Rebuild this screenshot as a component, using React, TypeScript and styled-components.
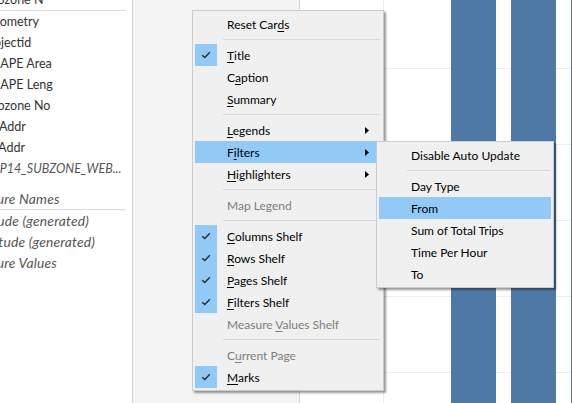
import React from "react";
import styled, { createGlobalStyle } from "styled-components";

const GlobalStyle = createGlobalStyle`
  html, body { margin: 0; padding: 0; background: #fff; }
  body { overflow: hidden; }
  * { box-sizing: border-box; }
`;

const Page = styled.div`
  position: relative;
  display: flex;
  width: 572px;
  height: 403px;
  overflow: hidden;
  background: #fff;
`;

const DataPane = styled.div`
  width: 133px;
  flex: none;
  background: #fff;
  border-right: 1px solid #d4d4d4;
  overflow: hidden;
  display: flex;
  flex-direction: column;
`;

const FieldList = styled.div`
  margin-top: -11px;
  display: flex;
  flex-direction: column;
`;

const Field = styled.div<{ $shift: number; $italic?: boolean; $size?: number }>`
  height: 21px;
  line-height: 21px;
  white-space: nowrap;
  margin-left: ${(p) => -p.$shift}px;
  font-family: Lato, "Liberation Sans", sans-serif;
  font-size: ${(p) => p.$size ?? 12.5}px;
  letter-spacing: ${(p) => (p.$size ? 0.2 : 0)}px;
  font-style: ${(p) => (p.$italic ? "italic" : "normal")};
  color: ${(p) => (p.$italic ? "#555" : "#333")};
`;

const FieldDivider = styled.div`
  height: 1px;
  margin-right: 6px;
  background: #dedede;
`;

const FieldGap = styled.div`
  height: 9px;
`;

const ShelfArea = styled.div`
  width: 167px;
  flex: none;
  background: #f3f3f3;
  border-right: 1px solid #d4d4d4;
`;

const ChartArea = styled.div`
  flex: 1;
  display: flex;
  background: #fff;
`;

const RowHeader = styled.div`
  width: 84px;
  flex: none;
  border-right: 1px solid #ededed;
`;

const Plot = styled.svg`
  flex: 1;
  display: block;
  height: 403px;
`;

const MenuBox = styled.div<{ $left: number; $top: number; $width: number }>`
  position: absolute;
  left: ${(p) => p.$left}px;
  top: ${(p) => p.$top}px;
  width: ${(p) => p.$width}px;
  background: #f0f0f0;
  border: 1px solid #cccccc;
  padding: 2px;
  box-shadow: 2px 2px 2px rgba(0, 0, 0, 0.4);
  font-family: Lato, "Liberation Sans", sans-serif;
  font-size: 12px;
  color: #000;
  z-index: 2;
`;

const Item = styled.div<{ $active?: boolean; $disabled?: boolean }>`
  display: flex;
  align-items: center;
  height: 22px;
  background: ${(p) => (p.$active ? "#91c9f7" : "transparent")};
  color: ${(p) => (p.$disabled ? "#7d7d7d" : "#000")};
  white-space: nowrap;
  u { text-decoration: underline; text-underline-offset: 2px; }
`;

const CheckCell = styled.div<{ $checked?: boolean }>`
  width: 22px;
  height: 22px;
  flex: none;
  display: flex;
  align-items: center;
  justify-content: center;
  background: ${(p) => (p.$checked ? "#91c9f7" : "transparent")};
`;

const Label = styled.span`
  flex: 1;
  padding-left: 10px;
`;

const Arrow = styled.svg`
  flex: none;
  margin-right: 12px;
`;

const Separator = styled.div`
  height: 9px;
  display: flex;
  align-items: center;
  padding-left: 28px;
  padding-right: 1px;
  &::after {
    content: "";
    flex: 1;
    height: 1px;
    background: #d7d7d7;
  }
`;

const Check = () => (
  <svg width="10" height="8" viewBox="0 0 10 8">
    <path d="M1.2 4.2 L3.8 6.6 L8.8 1.2" fill="none" stroke="#2b2b2b" strokeWidth="1.4" />
  </svg>
);

const SubArrow = () => (
  <Arrow width="4" height="7" viewBox="0 0 4 7">
    <polygon points="0,0 4,3.5 0,7" fill="#000" />
  </Arrow>
);

type MI = {
  label: React.ReactNode;
  checked?: boolean;
  disabled?: boolean;
  active?: boolean;
  sub?: boolean;
};

const mainMenu: (MI | "sep")[] = [
  { label: <>Reset Car<u>d</u>s</> },
  "sep",
  { label: <><u>T</u>itle</>, checked: true },
  { label: <>C<u>a</u>ption</> },
  { label: <><u>S</u>ummary</> },
  "sep",
  { label: <><u>L</u>egends</>, sub: true },
  { label: <>F<u>i</u>lters</>, sub: true, active: true },
  { label: <><u>H</u>ighlighters</>, sub: true },
  "sep",
  { label: "Map Legend", disabled: true },
  "sep",
  { label: <><u>C</u>olumns Shelf</>, checked: true },
  { label: <><u>R</u>ows Shelf</>, checked: true },
  { label: <><u>P</u>ages Shelf</>, checked: true },
  { label: <><u>F</u>ilters Shelf</>, checked: true },
  { label: <>Measure <u>V</u>alues Shelf</>, disabled: true },
  "sep",
  { label: <>C<u>u</u>rrent Page</>, disabled: true },
  { label: <><u>M</u>arks</>, checked: true },
];

const subMenu: (MI | "sep")[] = [
  { label: "Disable Auto Update" },
  "sep",
  { label: "Day Type" },
  { label: "From", active: true },
  { label: "Sum of Total Trips" },
  { label: "Time Per Hour" },
  { label: "To" },
];

const renderItems = (items: (MI | "sep")[]) =>
  items.map((it, i) =>
    it === "sep" ? (
      <Separator key={i} />
    ) : (
      <Item key={i} $active={it.active} $disabled={it.disabled}>
        <CheckCell $checked={it.checked}>{it.checked ? <Check /> : null}</CheckCell>
        <Label>{it.label}</Label>
        {it.sub ? <SubArrow /> : null}
      </Item>
    )
  );

const gridYs = [68, 144, 220, 296, 372];

export default function App() {
  return (
    <>
      <GlobalStyle />
      <Page>
        <DataPane>
          <FieldList>
            <Field $shift={16}>Subzone N</Field>
            <FieldDivider />
            <Field $shift={16}>Geometry</Field>
            <Field $shift={16}>Objectid</Field>
            <Field $shift={16}>SHAPE Area</Field>
            <Field $shift={16}>SHAPE Leng</Field>
            <Field $shift={16}>Subzone No</Field>
            <Field $shift={12}>X Addr</Field>
            <Field $shift={12}>Y Addr</Field>
            <Field $shift={11} $italic>MP14_SUBZONE_WEB...</Field>
            <FieldGap />
            <Field $shift={35} $italic $size={13.8}>Measure Names</Field>
            <FieldDivider />
            <Field $shift={30} $italic $size={13.8}>Latitude (generated)</Field>
            <Field $shift={33} $italic $size={13.8}>Longitude (generated)</Field>
            <Field $shift={35} $italic $size={13.8}>Measure Values</Field>
          </FieldList>
        </DataPane>
        <ShelfArea />
        <ChartArea>
          <RowHeader />
          <Plot viewBox="0 0 188 403" width="188" height="403">
            {gridYs.map((y) => (
              <line key={y} x1="0" x2="188" y1={y + 0.5} y2={y + 0.5} stroke="#ededed" strokeWidth="1" />
            ))}
            <rect x={451 - 384} y="0" width="45" height="403" fill="#4e79a7" />
            <rect x={511 - 384} y="0" width="45" height="403" fill="#4e79a7" />
            <rect x={571 - 384} y="0" width="1" height="403" fill="#4e79a7" />
          </Plot>
        </ChartArea>
        <MenuBox $left={192} $top={10} $width={192}>
          {renderItems(mainMenu)}
        </MenuBox>
        <MenuBox $left={376} $top={141} $width={178}>
          {renderItems(subMenu)}
        </MenuBox>
      </Page>
    </>
  );
}
